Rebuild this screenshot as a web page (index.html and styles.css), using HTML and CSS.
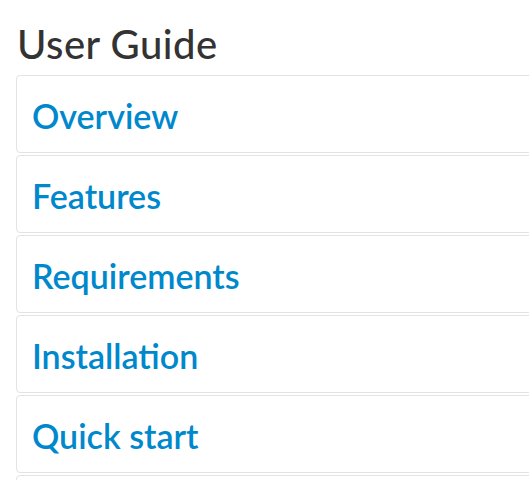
FILE: index.html
```html
<!DOCTYPE html>
<html>
<head>
<meta charset="utf-8">
<link rel="stylesheet" href="styles.css">
</head>
<body>
<div class="page">
  <h1 class="title">User Guide</h1>
  <ul class="guide">
    <li class="item"><a class="link" href="#">Overview</a></li>
    <li class="item"><a class="link" href="#">Features</a></li>
    <li class="item"><a class="link" href="#">Requirements</a></li>
    <li class="item"><a class="link" href="#">Installation</a></li>
    <li class="item"><a class="link" href="#">Quick start</a></li>
    <li class="item"><a class="link" href="#">Configuration</a></li>
  </ul>
</div>
</body>
</html>
```
FILE: styles.css
```css
html, body {
  margin: 0;
  padding: 0;
  background: #fff;
  overflow: hidden;
}
.page {
  padding: 20px 0 0 16px;
  width: 600px;
  font-family: Lato, "Liberation Sans", sans-serif;
}
.title {
  margin: 0 0 6px 1px;
  font-size: 40px;
  font-weight: 500;
  line-height: 49px;
  letter-spacing: 0.5px;
  color: #333;
}
.guide {
  list-style: none;
  margin: 0;
  padding: 0;
  display: flex;
  flex-direction: column;
  gap: 2px;
}
.item {
  height: 76px;
  border: 1px solid #e3e3e3;
  border-radius: 4px;
  display: flex;
  align-items: center;
  padding: 0 15px;
}
.link {
  color: #0088cc;
  text-decoration: none;
  font-weight: 600;
  font-size: 34px;
  margin-top: 2px;
}
```
